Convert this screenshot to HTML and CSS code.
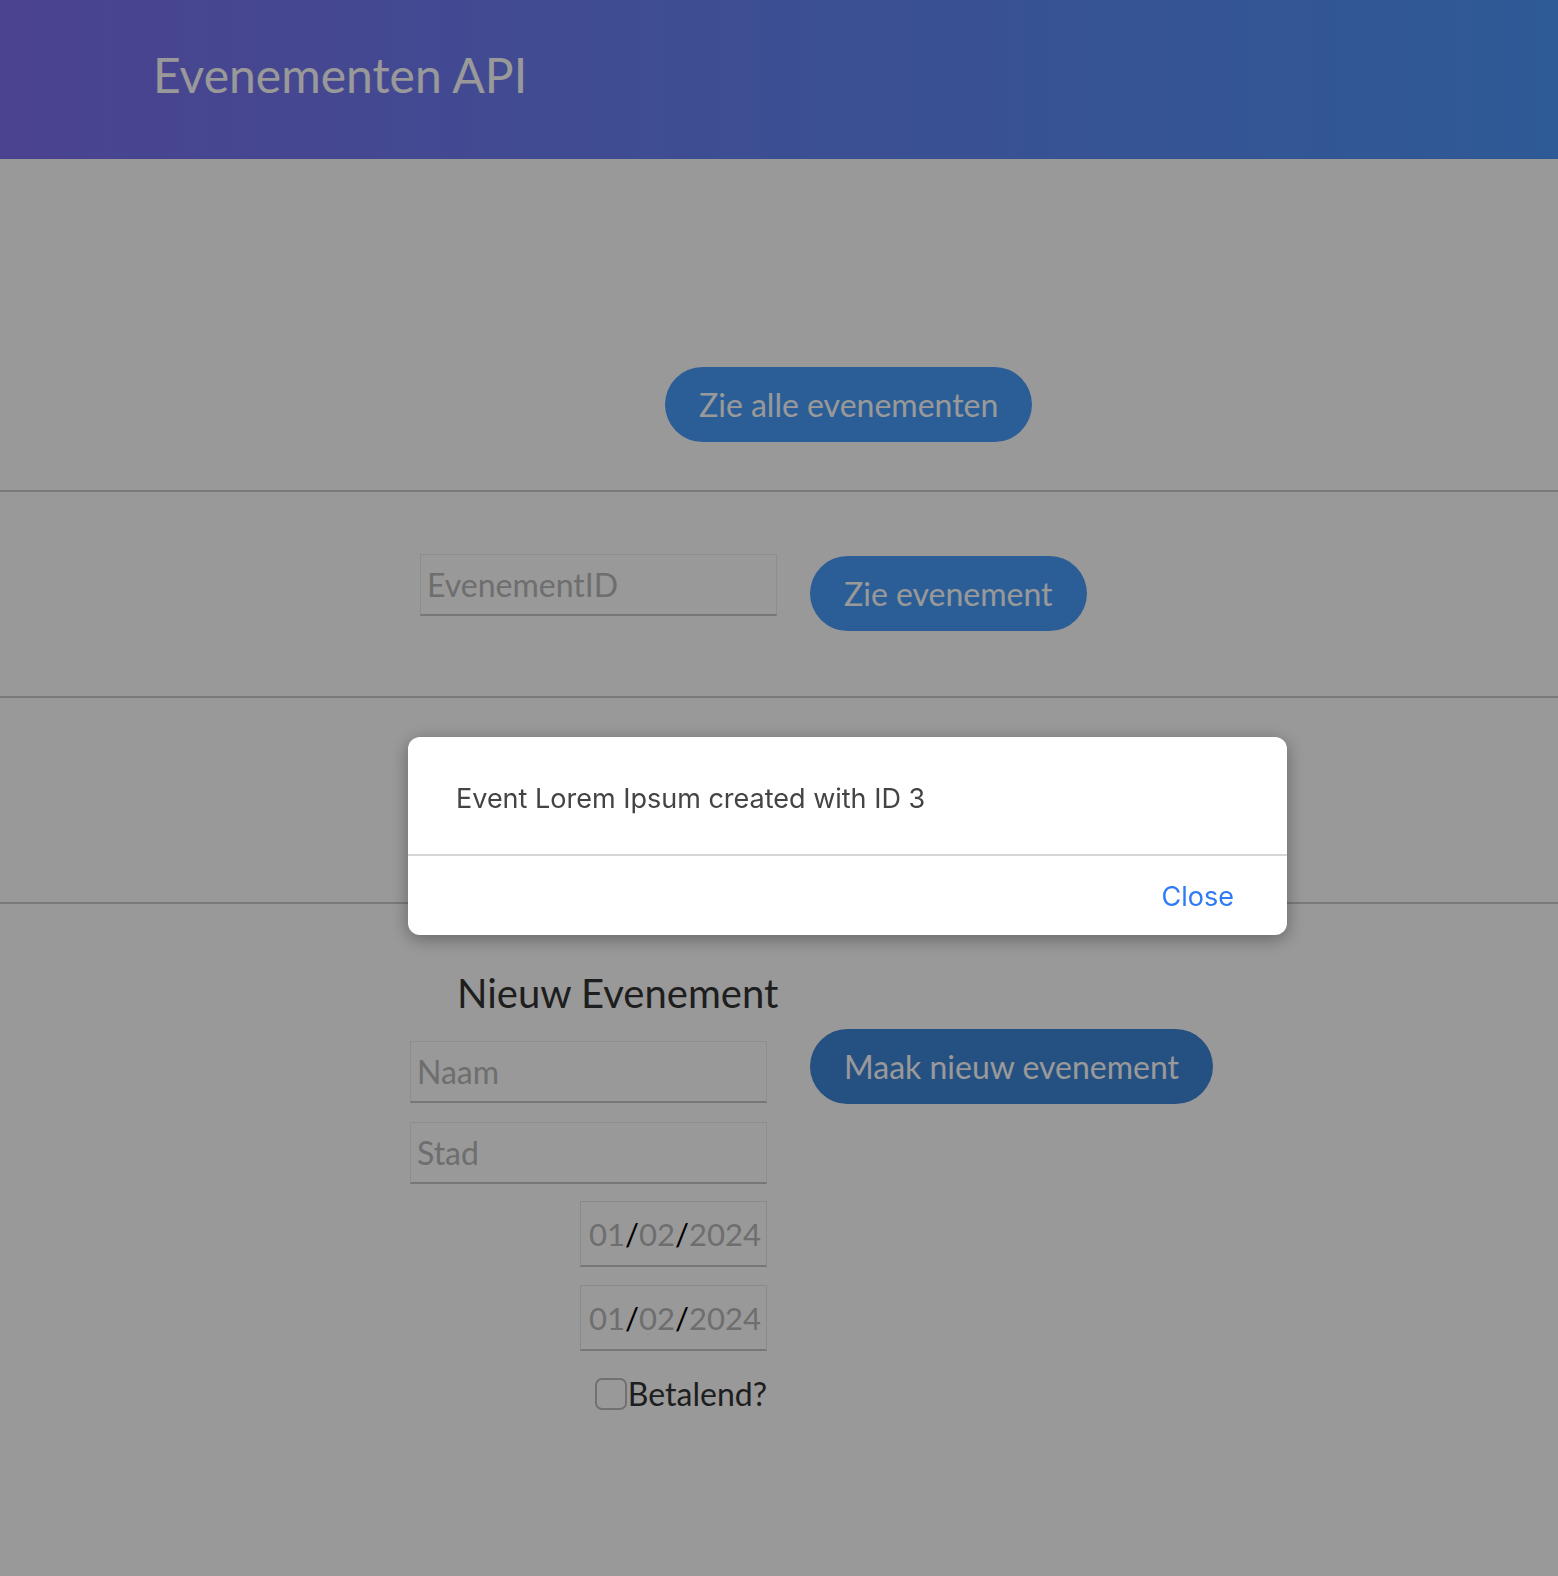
FILE: index.html
```html
<!DOCTYPE html>
<html lang="nl">
<head>
<meta charset="utf-8">
<title>Evenementen API</title>
<link rel="stylesheet" href="styles.css">
</head>
<body>
<header class="topbar">
  <h1 class="brand">Evenementen API</h1>
</header>
<main>
  <section class="sec sec-all">
    <button class="pill">Zie alle evenementen</button>
  </section>
  <section class="sec sec-one">
    <input class="field field-id" type="text" placeholder="EvenementID">
    <button class="pill pill-one">Zie evenement</button>
  </section>
  <section class="sec sec-empty"></section>
  <section class="sec sec-new">
    <h2 class="new-title">Nieuw Evenement</h2>
    <div class="new-grid">
      <div class="new-fields">
        <input class="field" type="text" placeholder="Naam">
        <input class="field field-stad" type="text" placeholder="Stad">
        <div class="date"><span class="dg">01</span><span class="sl">/</span><span class="dg">02</span><span class="sl">/</span><span class="dg">2024</span></div>
        <div class="date date-2"><span class="dg">01</span><span class="sl">/</span><span class="dg">02</span><span class="sl">/</span><span class="dg">2024</span></div>
        <label class="check"><span class="box"></span>Betalend?</label>
      </div>
      <button class="pill pill-dark">Maak nieuw evenement</button>
    </div>
  </section>
</main>
<div class="backdrop"></div>
<div class="modal">
  <div class="modal-body">Event Lorem Ipsum created with ID 3</div>
  <div class="modal-foot"><button class="modal-close">Close</button></div>
</div>
</body>
</html>
```

FILE: styles.css
```css
html, body {
  margin: 0;
  padding: 0;
}
body {
  background: #ffffff;
  font-family: "Lato", "Open Sans", sans-serif;
  color: #333333;
  min-height: 1576px;
}
.topbar {
  height: 159px;
  box-sizing: border-box;
  padding: 46px 0 0 153px;
  background: linear-gradient(90deg, #7d70f0 0%, #4d96fa 100%);
}
.brand {
  margin: 0;
  font-size: 48px;
  font-weight: 400;
  line-height: 1.2;
  color: #ffffff;
}
.sec {
  border-bottom: 2px solid #cbcbcb;
}
.sec-all {
  height: 333px;
  box-sizing: border-box;
  padding: 208px 0 0 665px;
}
.pill {
  height: 75px;
  padding: 0 34px;
  border: none;
  border-radius: 40px;
  background: #499dfa;
  color: #ffffff;
  font-family: "Lato", sans-serif;
  font-size: 32px;
  line-height: 75px;
  white-space: nowrap;
}
.sec-one {
  height: 206px;
  box-sizing: border-box;
  display: flex;
  align-items: flex-start;
  padding-left: 420px;
  gap: 33px;
}
.field {
  display: block;
  box-sizing: border-box;
  width: 357px;
  height: 62px;
  margin: 0;
  padding: 0 6px;
  border: 1px solid #ececec;
  border-bottom: 2px solid #c6c6c6;
  background: #ffffff;
  font-family: "Lato", sans-serif;
  font-size: 32px;
  color: #333333;
  outline: none;
}
.field::placeholder {
  color: #b8b8b8;
}
.field-id {
  margin-top: 62px;
}
.pill-one {
  margin-top: 64px;
}
.sec-empty {
  height: 206px;
  box-sizing: border-box;
}
.sec-new {
  border-bottom: none;
  padding-top: 65px;
}
.new-title {
  margin: 0 0 12px 457px;
  font-size: 40px;
  font-weight: 400;
  line-height: 48px;
  color: #333333;
}
.new-grid {
  display: flex;
  align-items: flex-start;
  gap: 43px;
  padding-left: 410px;
}
.new-fields {
  width: 357px;
  display: flex;
  flex-direction: column;
  align-items: flex-end;
  padding-top: 12px;
}
.field-stad {
  margin-top: 19px;
}
.date {
  box-sizing: border-box;
  width: 187px;
  height: 66px;
  margin-top: 17px;
  padding: 2px 0 0 8px;
  border: 1px solid #e6e6e6;
  border-bottom: 2px solid #c6c6c6;
  font-size: 31px;
  line-height: 60px;
  white-space: nowrap;
}
.date-2 {
  margin-top: 18px;
}
.dg {
  color: #b8b8b8;
}
.sl {
  color: #000000;
}
.check {
  display: flex;
  align-items: center;
  margin-top: 24px;
  font-size: 32px;
  color: #333333;
  line-height: 38px;
}
.box {
  box-sizing: border-box;
  width: 32px;
  height: 32px;
  border: 2px solid #bdbdbd;
  border-radius: 7px;
  background: #ffffff;
  margin-right: 1px;
}
.pill-dark {
  background: #3e85d9;
}
.backdrop {
  position: fixed;
  inset: 0;
  background: rgba(0, 0, 0, 0.4);
}
.modal {
  position: fixed;
  left: 408px;
  top: 737px;
  width: 879px;
  height: 198px;
  background: #ffffff;
  border-radius: 12px;
  box-shadow: 0 4px 18px rgba(0, 0, 0, 0.35);
  display: flex;
  flex-direction: column;
  overflow: hidden;
  font-family: "Inter", "Roboto", "Liberation Sans", sans-serif;
}
.modal-body {
  height: 119px;
  box-sizing: border-box;
  padding: 5px 0 0 48px;
  display: flex;
  align-items: center;
  font-size: 27px;
  color: #444444;
  border-bottom: 2px solid #d6d6d6;
}
.modal-foot {
  flex: 1;
  display: flex;
  align-items: center;
  justify-content: flex-end;
  padding: 2px 53px 0 0;
}
.modal-close {
  border: none;
  background: none;
  padding: 0;
  font-family: "Inter", "Roboto", "Liberation Sans", sans-serif;
  font-size: 27px;
  color: #2f7bf5;
}
```
